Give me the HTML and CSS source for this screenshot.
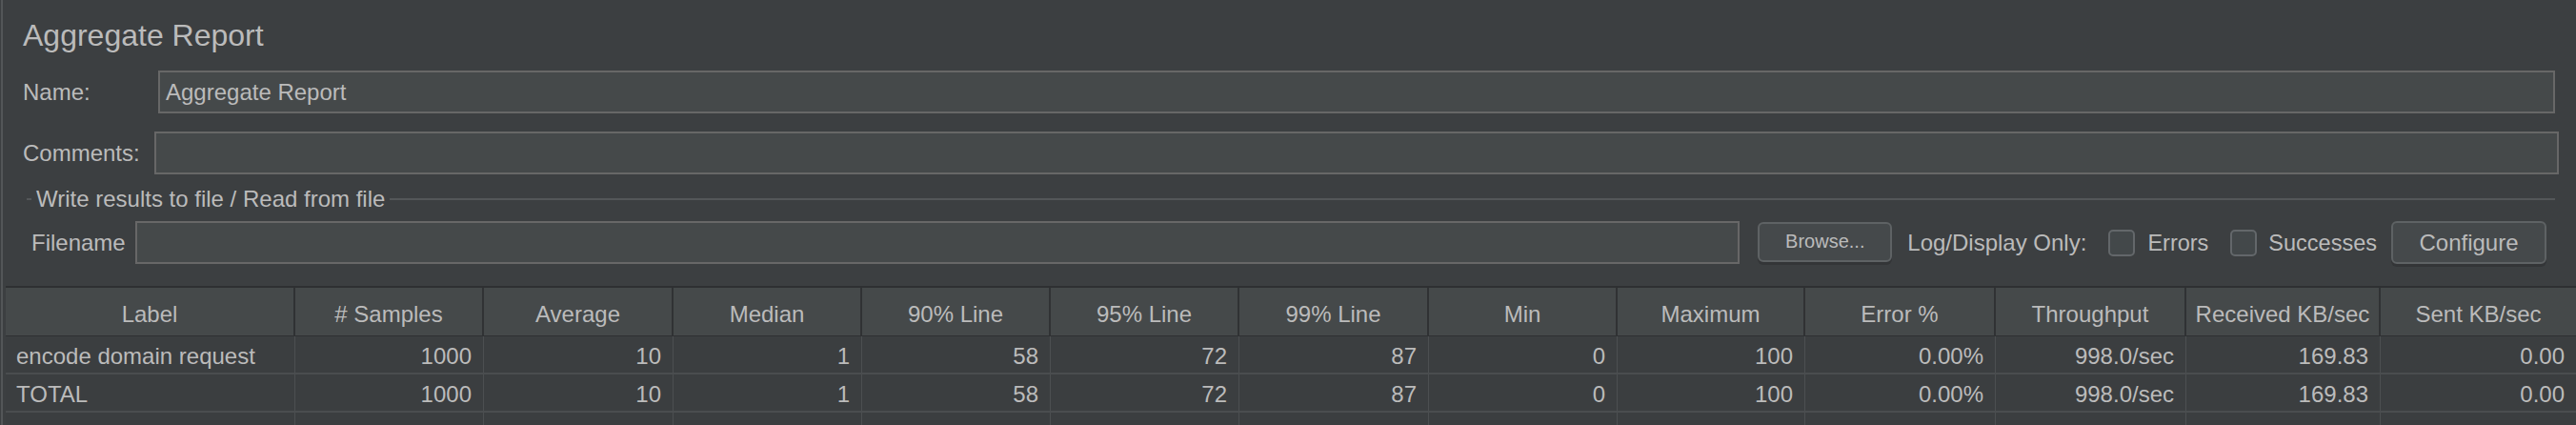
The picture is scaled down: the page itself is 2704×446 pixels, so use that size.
FILE: index.html
```html
<!DOCTYPE html>
<html>
<head>
<meta charset="utf-8">
<title>Aggregate Report</title>
<link rel="stylesheet" href="styles.css">
</head>
<body>
<div class="panel">
  <h1 class="title">Aggregate Report</h1>
  <div class="row name-row">
    <label class="lbl name-lbl">Name:</label>
    <div class="field">Aggregate Report</div>
  </div>
  <div class="row comments-row">
    <label class="lbl comments-lbl">Comments:</label>
    <div class="field"></div>
  </div>
  <fieldset class="file-box">
    <legend>Write results to file / Read from file</legend>
    <div class="file-row">
      <span class="lbl fname-lbl">Filename</span>
      <div class="field file-field"></div>
      <button class="btn browse">Browse...</button>
      <span class="lbl log-lbl">Log/Display Only:</span>
      <span class="check check-errors"></span>
      <span class="lbl chk-lbl">Errors</span>
      <span class="check check-succ"></span>
      <span class="lbl chk-lbl succ-lbl">Successes</span>
      <button class="btn configure">Configure</button>
    </div>
  </fieldset>
  <div class="table">
    <div class="th">Label</div>
    <div class="th"># Samples</div>
    <div class="th">Average</div>
    <div class="th">Median</div>
    <div class="th">90% Line</div>
    <div class="th">95% Line</div>
    <div class="th">99% Line</div>
    <div class="th">Min</div>
    <div class="th">Maximum</div>
    <div class="th">Error %</div>
    <div class="th">Throughput</div>
    <div class="th">Received KB/sec</div>
    <div class="th last">Sent KB/sec</div>

    <div class="td text">encode domain request</div>
    <div class="td">1000</div>
    <div class="td">10</div>
    <div class="td">1</div>
    <div class="td">58</div>
    <div class="td">72</div>
    <div class="td">87</div>
    <div class="td">0</div>
    <div class="td">100</div>
    <div class="td">0.00%</div>
    <div class="td">998.0/sec</div>
    <div class="td">169.83</div>
    <div class="td last">0.00</div>

    <div class="td text">TOTAL</div>
    <div class="td">1000</div>
    <div class="td">10</div>
    <div class="td">1</div>
    <div class="td">58</div>
    <div class="td">72</div>
    <div class="td">87</div>
    <div class="td">0</div>
    <div class="td">100</div>
    <div class="td">0.00%</div>
    <div class="td">998.0/sec</div>
    <div class="td">169.83</div>
    <div class="td last">0.00</div>

    <div class="td text"></div>
    <div class="td"></div>
    <div class="td"></div>
    <div class="td"></div>
    <div class="td"></div>
    <div class="td"></div>
    <div class="td"></div>
    <div class="td"></div>
    <div class="td"></div>
    <div class="td"></div>
    <div class="td"></div>
    <div class="td"></div>
    <div class="td last"></div>
  </div>
</div>
</body>
</html>
```

FILE: styles.css
```css
html, body {
  margin: 0;
  padding: 0;
  background: #3c3f41;
  height: 446px;
  overflow: hidden;
}

body {
  font-family: "Liberation Sans", Arial, sans-serif;
  color: #bbbbbb;
}

.panel {
  margin-left: 1px;
  border-left: 2px solid #535658;
  min-height: 446px;
  padding-top: 18px;
  box-sizing: border-box;
}

.title {
  margin: 0 0 0 21px;
  font-size: 32px;
  font-weight: normal;
  line-height: 38px;
  white-space: nowrap;
}

.row {
  display: flex;
  align-items: center;
  height: 45px;
}

.name-row {
  margin: 18px 22px 0 21px;
}

.comments-row {
  margin: 19px 18px 0 21px;
}

.lbl {
  font-size: 24px;
  line-height: 28px;
  flex: none;
  white-space: nowrap;
}

.name-lbl {
  width: 142px;
}

.comments-lbl {
  width: 138px;
}

.field {
  flex: 1;
  height: 45px;
  box-sizing: border-box;
  border: 2px solid #676767;
  background: #45494a;
  font-size: 24px;
  line-height: 41px;
  padding: 0 6px;
  white-space: nowrap;
}

.file-box {
  margin: 12px 22px 0 25px;
  padding: 9px 0 0 5px;
  border: 0;
  border-top: 2px solid #545759;
  min-width: 0;
}

.file-box legend {
  padding: 0 5px;
  font-size: 24px;
  line-height: 28px;
  white-space: nowrap;
}

.file-row {
  display: flex;
  align-items: center;
  height: 45px;
  padding-right: 9px;
}

.fname-lbl {
  margin-right: 10px;
}

.file-field {
  min-width: 0;
}

.btn {
  flex: none;
  box-sizing: border-box;
  border: 2px solid #5e6264;
  border-radius: 6px;
  background: #45494b;
  color: #bbbbbb;
  font-family: "Liberation Sans", Arial, sans-serif;
  padding: 0;
  box-shadow: 0 3px 0 #333537;
}

.browse {
  margin-left: 19px;
  width: 141px;
  height: 42px;
  font-size: 20px;
  margin-top: -2px;
}

.configure {
  margin-left: 15px;
  width: 163px;
  height: 45px;
  font-size: 24px;
}

.log-lbl {
  margin-left: 16px;
}

.check {
  flex: none;
  width: 28px;
  height: 28px;
  box-sizing: border-box;
  border: 2px solid #63676a;
  border-radius: 5px;
  background: #43484a;
  margin-left: 23px;
}

.chk-lbl {
  font-size: 23.5px;
  margin-left: 13px;
}

.succ-lbl {
  margin-left: 12px;
}

.table {
  margin: 23px 0 0 3px;
  border-top: 2px solid #2e3032;
  display: grid;
  grid-template-columns: 304px 198px 199px 198px 198px 198px 199px 198px 197px 200px 200px 204px 205px;
}

.th {
  box-sizing: border-box;
  height: 51px;
  padding-top: 6px;
  line-height: 44px;
  font-size: 24px;
  text-align: center;
  background: #45494a;
  border-right: 2px solid #303234;
  border-bottom: 1px solid #2e3032;
  white-space: nowrap;
}

.th.last {
  border-right: 0;
}

.td {
  box-sizing: border-box;
  height: 40px;
  padding: 3px 12px 0 11px;
  line-height: 35px;
  font-size: 24px;
  text-align: right;
  background: #3b3e40;
  border-right: 1px solid #4c4f51;
  border-bottom: 2px solid #4a4d4f;
  white-space: nowrap;
}

.td.text {
  text-align: left;
}

.td.last {
  border-right: 0;
}
```
